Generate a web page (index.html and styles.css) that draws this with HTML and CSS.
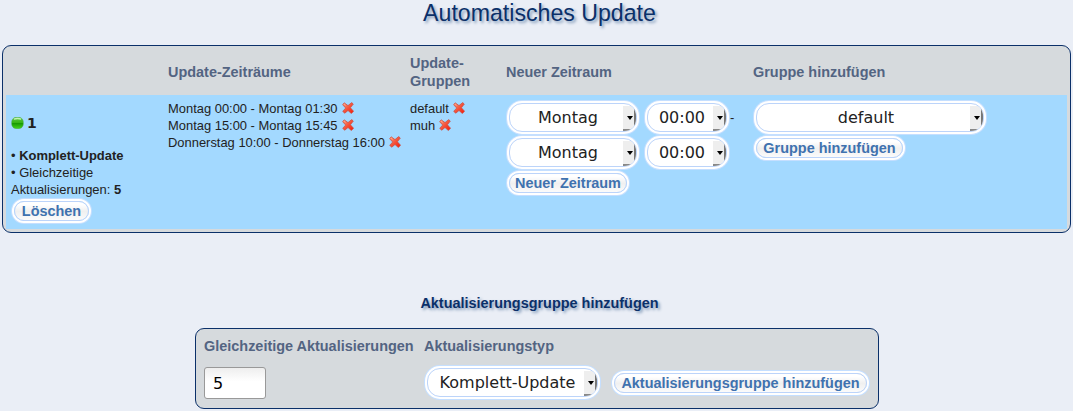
FILE: index.html
```html
<!DOCTYPE html>
<html lang="de">
<head>
<meta charset="utf-8">
<title>Automatisches Update</title>
<link rel="stylesheet" href="styles.css">
</head>
<body>
<svg class="defs" width="0" height="0" aria-hidden="true">
  <defs>
    <linearGradient id="red" x1="0" y1="0" x2="1" y2="1"><stop offset="0" stop-color="#ff9c7c"/><stop offset=".5" stop-color="#f4523a"/><stop offset="1" stop-color="#f51808"/></linearGradient>
    <linearGradient id="green" x1="0" y1="0" x2="0" y2="1"><stop offset="0" stop-color="#62c84a"/><stop offset=".48" stop-color="#35b512"/><stop offset=".52" stop-color="#169800"/><stop offset="1" stop-color="#43d51c"/></linearGradient>
    <symbol id="cross" viewBox="0 0 12 12"><path d="M2.2.8 6 3.6 9.7.5l1.6 1.6L8.4 5.8l3.2 3.5-2.3 2.2L6 8.5l-3.2 2.7L.7 9.4 3.7 6 .6 2.7z" fill="url(#red)" stroke="#c94c40" stroke-width=".7" stroke-linejoin="round"/><path d="M2.1 2 3.6 3.4" fill="none" stroke="#ffb49c" stroke-width=".8"/></symbol>
  </defs>
</svg>
<h1 class="title">Automatisches Update</h1>
<section class="panel groups">
  <div class="row head">
    <div></div><div>Update-Zeiträume</div><div>Update-<br>Gruppen</div><div>Neuer Zeitraum</div><div>Gruppe hinzufügen</div>
  </div>
  <div class="row data">
    <div class="info">
      <div class="ident"><svg class="dot" viewBox="0 0 12 12"><rect x=".2" y=".3" width="11.6" height="11.4" rx="4.6" fill="url(#green)" stroke="#4aaa4a" stroke-width=".5"/><path d="M2.4 2.2Q6 .8 9.6 2.2" fill="none" stroke="#c5f1b2" stroke-width="1.4"/></svg><b>1</b></div>
      <div>• <b>Komplett-Update</b></div>
      <div>• Gleichzeitige</div>
      <div>Aktualisierungen: <b>5</b></div>
      <button class="btn delete">Löschen</button>
    </div>
    <div class="list">
      <div>Montag 00:00 - Montag 01:30 <svg class="x"><use href="#cross"/></svg></div>
      <div>Montag 15:00 - Montag 15:45 <svg class="x"><use href="#cross"/></svg></div>
      <div>Donnerstag 10:00 - Donnerstag 16:00 <svg class="x"><use href="#cross"/></svg></div>
    </div>
    <div class="list">
      <div>default <svg class="x"><use href="#cross"/></svg></div>
      <div>muh <svg class="x"><use href="#cross"/></svg></div>
    </div>
    <div class="form">
      <div class="line"><div class="sel day"><span>Montag</span><i></i></div><div class="sel time"><span>00:00</span><i></i></div><span class="dash">-</span></div>
      <div class="line"><div class="sel day"><span>Montag</span><i></i></div><div class="sel time"><span>00:00</span><i></i></div></div>
      <button class="btn new">Neuer Zeitraum</button>
    </div>
    <div class="form">
      <div class="line"><div class="sel group"><span>default</span><i></i></div></div>
      <button class="btn add">Gruppe hinzufügen</button>
    </div>
  </div>
</section>
<h2 class="subtitle">Aktualisierungsgruppe hinzufügen</h2>
<section class="panel create">
  <div class="label">Gleichzeitige Aktualisierungen</div><div class="label">Aktualisierungstyp</div><div></div>
  <div><input class="count" type="text" value="5"></div>
  <div class="sel type"><span>Komplett-Update</span><i></i></div>
  <button class="btn submit">Aktualisierungsgruppe hinzufügen</button>
</section>
</body>
</html>
```
FILE: styles.css
```css
* { box-sizing: border-box; }
body { margin: 0; height: 411px; overflow: hidden; background: #eaeef6; color: #222; font: 12.96px/17px "Liberation Sans", Arial, sans-serif; }
.defs { display: block; }
.title { margin: 0; padding-left: 6px; height: 45px; text-align: center; color: #0b3069; font-size: 23.15px; font-weight: 400; line-height: 26px; text-shadow: 2px 2px 3px #829ab8; }
.panel { background: #d6dadd; border: 1px solid #0b3069; border-radius: 9px; }
.groups { width: 1069px; height: 188px; margin-left: 2px; padding: 0 3px; }
.row { display: grid; grid-template-columns: 162px 242px 96px 247px 1fr; }
.head { height: 49px; padding-top: 2px; align-items: center; }
.head, .label { color: #536482; font-size: 14.45px; font-weight: 700; line-height: 18px; }
.data { height: 134px; background: #a3d9ff; }
.info { padding: 17px 0 0 5px; }
.ident { display: flex; align-items: center; height: 24px; margin-bottom: 11px; gap: 3px; }
.ident b { font: 700 14px/17px "DejaVu Sans", sans-serif; margin-bottom: 1px; }
.dot { width: 13px; height: 12px; margin-bottom: 3px; }
.list { padding-top: 5px; font-size: 12.93px; }
.x { width: 12px; height: 12px; vertical-align: -1px; display: inline-block; margin-left: .5px; }
.form { padding: 8px 0 0 3px; }
.line { display: flex; height: 35px; }
.sel { display: flex; height: 29px; background: #fff; border: 1px solid #bcd4fa; border-radius: 13px; box-shadow: 0 0 0 2px #fff, 0 0 0 3px #c5dfff; color: #222; font: 16px/27px "DejaVu Sans", sans-serif; overflow: hidden; }
.sel span { flex: 1; text-align: center; padding-left: 3px; white-space: nowrap; }
.sel i { width: 13px; height: 25px; margin-top: 2px; padding: 0 0 0 2px; background: #eee; border-right: 2px solid #777; border-bottom: 2px solid #888; display: flex; align-items: center; justify-content: center; }
.sel i::after { content: ""; border: 3px solid transparent; border-top: 4px solid #000; border-bottom: 0; }
.day { width: 128px; margin-right: 10px; }
.time { width: 80px; }
.group { width: 228px; }
.group span { padding-left: 5px; }
.type { width: 171px; }
.dash { margin: 6px 0 0 3px; }
.btn { display: block; height: 20px; padding: 0; border: 1px solid #bcd4fa; border-radius: 10px; background: linear-gradient(#fff 15%, #f0f0f0 52%, #fbfbfb); box-shadow: 0 0 0 2px #fff, 0 0 0 3px #c5dfff; color: #3f72af; font: 700 14.45px/18px "Liberation Sans", Arial, sans-serif; white-space: nowrap; }
.delete { width: 75px; margin: 3px 0 0 3px; }
.new { width: 118px; }
.add { width: 147px; }
.subtitle { margin: 60px 0 0; padding-left: 6px; height: 35px; text-align: center; color: #0b3069; font-size: 14.45px; line-height: 20px; text-shadow: 2px 2px 3px #829ab8; }
.create { width: 684px; height: 81px; margin-left: 195px; padding: 8px 8px 0; display: grid; grid-template-columns: 220px 190px 1fr; grid-template-rows: 28px 35px; }
.count { display: block; width: 62px; height: 32px; margin-top: 2px; padding: 0 8px; border: 1px solid #999; border-radius: 3px; background: linear-gradient(#eee, #fff 45%); font: 16px "DejaVu Sans", sans-serif; }
.create .sel { margin: 3px 0 0 3px; }
.submit { width: 253px; margin-top: 8px; }
```
